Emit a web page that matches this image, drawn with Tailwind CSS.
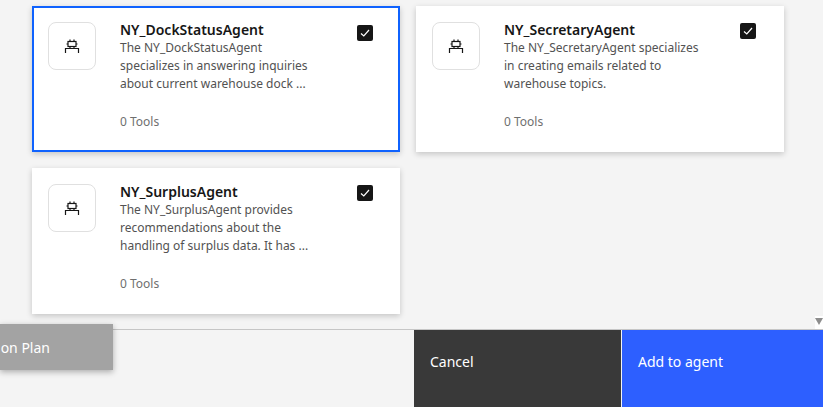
<!DOCTYPE html>
<html><head><script src="https://cdn.jsdelivr.net/npm/@tailwindcss/browser@4"></script></head>
<body class="w-[823px] h-[407px] overflow-hidden bg-[#f4f4f4] font-['Noto_Sans',sans-serif] relative">
<main class="h-[329px] pt-[6px] pl-[32px] relative">
<div class="grid grid-cols-[368px_368px] gap-4 w-[752px]">
<article class="h-[146px] bg-white border-2 border-[#0f62fe] shadow-[0_2px_6px_rgba(0,0,0,0.2)] flex pt-[14px] pl-[14px]">
<div class="w-[48px] h-[48px] rounded-lg border border-[#e0e0e0] flex items-center justify-center shrink-0"><svg width="16" height="16" viewBox="0 0 16 16" fill="none" stroke="#161616" stroke-width="1.2"><rect x="4" y="3.5" width="8" height="5"/><path d="M6 1.5v2M10 1.5v2M2.5 6H4M12 6h1.5M6 8.5v2M10 8.5v2M1.5 15v-4.5h13V15"/></svg></div>
<div class="ml-[24px] w-[196px]"><h3 class="text-[14px] leading-[18px] font-semibold text-[#161616] mt-[-1px]">NY_DockStatusAgent</h3>
<p class="text-[12px] leading-[18px] text-[#525252] mt-[0px] whitespace-nowrap">The NY_DockStatusAgent<br>specializes in answering inquiries<br>about current warehouse dock ...</p>
<p class="text-[12px] leading-[18px] text-[#6f6f6f] mt-[20px]">0 Tools</p></div>
<div class="ml-[41px] mt-[3px] w-4 h-4 rounded-[2px] bg-[#161616] flex items-center justify-center"><svg width="12" height="12" viewBox="0 0 12 12" fill="none" stroke="#fff" stroke-width="1.2"><path d="M2 6.5l2.8 2.5L10 3"/></svg></div>
</article>
<article class="h-[146px] bg-white shadow-[0_2px_6px_rgba(0,0,0,0.2)] flex pt-[16px] pl-[16px]">
<div class="w-[48px] h-[48px] rounded-lg border border-[#e0e0e0] flex items-center justify-center shrink-0"><svg width="16" height="16" viewBox="0 0 16 16" fill="none" stroke="#161616" stroke-width="1.2"><rect x="4" y="3.5" width="8" height="5"/><path d="M6 1.5v2M10 1.5v2M2.5 6H4M12 6h1.5M6 8.5v2M10 8.5v2M1.5 15v-4.5h13V15"/></svg></div>
<div class="ml-[24px] w-[196px]"><h3 class="text-[14px] leading-[18px] font-semibold text-[#161616] mt-[-1px]">NY_SecretaryAgent</h3>
<p class="text-[12px] leading-[18px] text-[#525252] whitespace-nowrap">The NY_SecretaryAgent specializes<br>in creating emails related to<br>warehouse topics.</p>
<p class="text-[12px] leading-[18px] text-[#6f6f6f] mt-[20px]">0 Tools</p></div>
<div class="ml-[40px] mt-[1px] w-4 h-4 rounded-[2px] bg-[#161616] flex items-center justify-center"><svg width="12" height="12" viewBox="0 0 12 12" fill="none" stroke="#fff" stroke-width="1.2"><path d="M2 6.5l2.8 2.5L10 3"/></svg></div>
</article>
<article class="h-[146px] bg-white shadow-[0_2px_6px_rgba(0,0,0,0.2)] flex pt-[16px] pl-[16px]">
<div class="w-[48px] h-[48px] rounded-lg border border-[#e0e0e0] flex items-center justify-center shrink-0"><svg width="16" height="16" viewBox="0 0 16 16" fill="none" stroke="#161616" stroke-width="1.2"><rect x="4" y="3.5" width="8" height="5"/><path d="M6 1.5v2M10 1.5v2M2.5 6H4M12 6h1.5M6 8.5v2M10 8.5v2M1.5 15v-4.5h13V15"/></svg></div>
<div class="ml-[24px] w-[196px]"><h3 class="text-[14px] leading-[18px] font-semibold text-[#161616] mt-[-1px]">NY_SurplusAgent</h3>
<p class="text-[12px] leading-[18px] text-[#525252] whitespace-nowrap">The NY_SurplusAgent provides<br>recommendations about the<br>handling of surplus data. It has ...</p>
<p class="text-[12px] leading-[18px] text-[#6f6f6f] mt-[20px]">0 Tools</p></div>
<div class="ml-[41px] mt-[1px] w-4 h-4 rounded-[2px] bg-[#161616] flex items-center justify-center"><svg width="12" height="12" viewBox="0 0 12 12" fill="none" stroke="#fff" stroke-width="1.2"><path d="M2 6.5l2.8 2.5L10 3"/></svg></div>
</article>
</div>
<div class="absolute right-0 top-[316px] w-[8px] h-[13px] bg-white flex justify-center"><div class="w-0 h-0 mt-[2px] border-x-[4px] border-x-transparent border-t-[7px] border-t-[#8d8d8d]"></div></div>
</main>
<footer class="h-[78px] border-t border-[#c6c6c6] flex justify-end">
<button class="w-[207px] h-full bg-[#393939] text-white text-[14px] text-left pl-4 pb-[14px]">Cancel</button>
<button class="w-[201px] h-full ml-px bg-[#2d5fff] text-white text-[14px] text-left pl-4 pb-[14px]">Add to agent</button>
</footer>
<div class="absolute left-0 top-[324px] w-[113px] h-[46px] bg-[#a3a3a3] text-white text-[14px] flex items-center justify-end pr-[63px] shadow-[0_2px_6px_rgba(0,0,0,0.3)] whitespace-nowrap">on Plan</div>
</body></html>
